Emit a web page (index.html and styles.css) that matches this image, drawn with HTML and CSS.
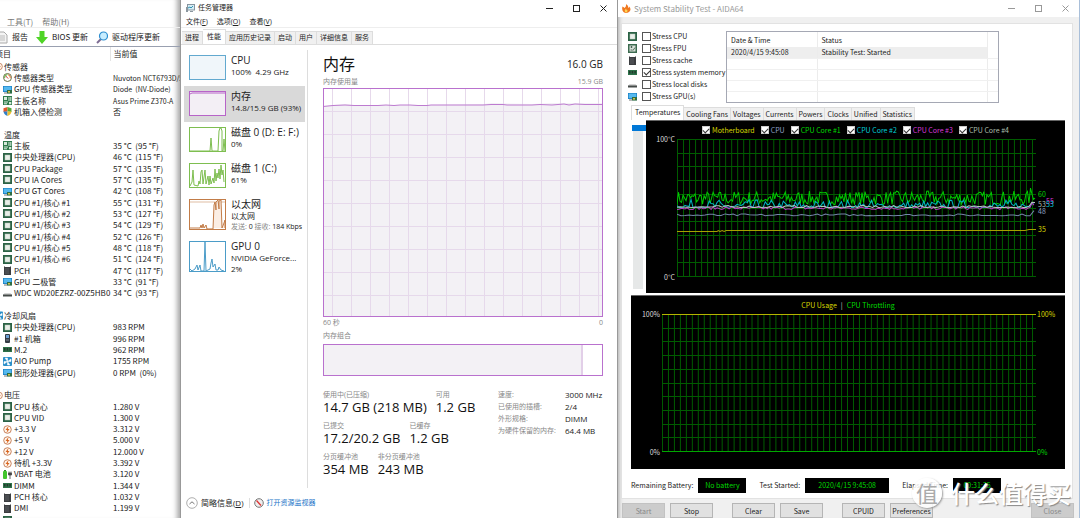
FILE: index.html
```html
<!DOCTYPE html>
<html lang="zh-CN">
<head>
<meta charset="utf-8">
<title>System Stability Test - AIDA64</title>
<link rel="stylesheet" href="styles.css">
</head>
<body>
<svg class="sprite" aria-hidden="true">
  <symbol id="i-cpu" viewBox="0 0 9 9"><rect width="9" height="9" fill="#2b6245"/><rect x="2" y="2" width="5" height="5" fill="#e8eee8" stroke="#b9c9bc" stroke-width=".5"/></symbol>
  <symbol id="i-fpu" viewBox="0 0 9 9"><rect width="9" height="9" fill="#3c6b50"/><rect x="1.5" y="1.5" width="6" height="6" fill="#d9e2da"/><path d="M2.5 3h2M3.5 2v2M5 6.5l2-3M2.5 6h2" stroke="#33513f" stroke-width=".8"/></symbol>
  <symbol id="i-gpu" viewBox="0 0 9 9"><rect y="1" width="9" height="6" fill="#1a7fc4"/><rect x=".7" y="1.6" width="7.6" height="4.6" fill="#55b8ee"/><rect x="4" y="5" width="5" height="3.6" fill="#2d6d45"/><rect x="5" y="6" width="2" height="1.6" fill="#d3c14e"/><path d="M1 8h3" stroke="#777"/></symbol>
  <symbol id="i-board" viewBox="0 0 9 9"><rect width="9" height="9" fill="#2f7b4c"/><path d="M1 1h3v3H1zM5.5 1h1v4h-1zM7.3 1h1v4h-1zM1 5.5h4v1H1zM1 7.3h3v1H1zM6 6h2.3v2.3H6z" fill="#d8eadc"/></symbol>
  <symbol id="i-gauge" viewBox="0 0 9 9"><circle cx="4.5" cy="4.5" r="4" fill="#fff" stroke="#6a7045"/><path d="M1.6 5A3 3 0 0 1 4.5 1.6" stroke="#55b033" fill="none"/><path d="M5 1.7A3 3 0 0 1 7.3 5" stroke="#e2702c" fill="none"/><path d="M2.8 3l2.4 2.6" stroke="#c22" stroke-width=".9"/></symbol>
  <symbol id="i-shield" viewBox="0 0 9 9"><path d="M4.5 0L.5 1.3V5l4-.5z" fill="#e2582c"/><path d="M4.5 0l4 1.3V5l-4-.5z" fill="#58a83a"/><path d="M.5 4.5h4V9Q1 7.500.5 4.500z" fill="#2f7fc8"/><path d="M8.500 4.500h-4V9Q8 7.500 8.500 4.500z" fill="#f0be2c"/></symbol>
  <symbol id="i-chip" viewBox="0 0 9 9"><path d="M1 1l1-1v1h5V0l1 1v8H1z" fill="#3b3d40"/><path d="M3 2v6M5 2v6" stroke="#6b6e72" stroke-width=".7"/></symbol>
  <symbol id="i-disk" viewBox="0 0 9 9"><path d="M1.500 4h6L9 6H0z" fill="#d5d5d5"/><rect y="5.500" width="9" height="2" fill="#454a48"/></symbol>
  <symbol id="i-case" viewBox="0 0 9 9"><rect x="2" width="5" height="9" rx="1" fill="#343b44"/><rect x="3" y="1" width="3" height="3" fill="#6ca0d4"/><path d="M3 6h3" stroke="#7e8791"/></symbol>
  <symbol id="i-ram" viewBox="0 0 9 9"><rect y="2" width="9" height="5" fill="#2c7148"/><path d="M1 3h1.500v2.500H1zM3.700 3h1.500v2.500H3.700zM6.400 3h1.500v2.500H6.400z" fill="#24372c"/></symbol>
  <symbol id="i-fan" viewBox="0 0 9 9"><rect width="9" height="9" rx="1" fill="#2b8fc9"/><path d="M4.500 4.500L2 1h2.500zM4.500 4.500L8 2v2.500zM4.500 4.500L7 8H4.500zM4.500 4.500L1 7V4.500z" fill="#fff" stroke="#fff" stroke-width=".5"/></symbol>
  <symbol id="i-volt" viewBox="0 0 9 9"><circle cx="4.500" cy="4.500" r="3.800" fill="#fff4ea" stroke="#bb6a3e" stroke-width=".8"/><path d="M5.500 1L2.500 5h1.800L3.500 8 6.500 4H4.800z" fill="#d9641e"/></symbol>
  <symbol id="i-battery" viewBox="0 0 9 9"><rect y="1" width="4" height="8" rx="1" fill="#42c52d"/><rect x="1" width="2" height="1" fill="#2f8a24"/><path d="M7 5v4M5.500 3h3v2h-3zM6 1.500V3M8 1.500V3" stroke="#444" stroke-width=".8" fill="#444"/></symbol>
  <symbol id="i-min" viewBox="0 0 9 9"><path d="M1 4.500h7" stroke="currentColor"/></symbol>
  <symbol id="i-max" viewBox="0 0 9 9"><rect x="1.500" y="1.500" width="6" height="6" fill="none" stroke="currentColor"/></symbol>
  <symbol id="i-close" viewBox="0 0 9 9"><path d="M1.500 1.500l6 6M7.500 1.500l-6 6" stroke="currentColor" fill="none"/></symbol>
</svg>

<main class="desktop">
  <section class="sensors" aria-label="传感器">
    <nav class="sensors-menu"><button>工具(T)</button><button>帮助(H)</button></nav>
    <div class="toolbar">
      <button><svg class="tool-icon" viewBox="0 0 12 13"><path d="M1 1h7l3 3v8H1z" fill="#f4f4f4" stroke="#aaa"/><path d="M3 5h6M3 7h6M3 9h6" stroke="#bbb"/></svg>报告</button>
      <button><svg class="tool-icon" viewBox="0 0 12 13"><path d="M3.500 0h5v6H12l-6 7-6-7h3.500z" fill="#4fd426"/></svg>BIOS 更新</button>
      <button><svg class="tool-icon" viewBox="0 0 12 13"><path d="M1 12l4-4" stroke="#7d6d94" stroke-width="2"/><circle cx="7.500" cy="5" r="4" fill="#c7edff" stroke="#2c8ed0" stroke-width="1.200"/></svg>驱动程序更新</button>
    </div>
    <div class="list-clip">
    <table class="sensor-table">
      <thead><tr><th scope="col">项目</th><th scope="col">当前值</th></tr></thead>
      <tbody id="sensor-rows"></tbody>
    </table>
    </div>
  </section>

  <section class="taskmgr" aria-label="任务管理器">
    <header class="titlebar">
      <svg class="app-icon" viewBox="0 0 9 9"><rect x="1.500" y=".5" width="7" height="5.500" fill="#d5edf5" stroke="#8795a0"/><path d="M2 4l2-1 1 1 2-2" stroke="#3293b5" fill="none"/><path d="M0 3h2v5H0zM4 7h3v1H4z" fill="#8b979f"/></svg>
      <h1>任务管理器</h1>
      <div class="window-buttons">
        <button aria-label="最小化"><svg><use href="#i-min"/></svg></button>
        <button aria-label="最大化"><svg><use href="#i-max"/></svg></button>
        <button aria-label="关闭"><svg><use href="#i-close"/></svg></button>
      </div>
    </header>
    <nav class="tm-menu"><button>文件(<u>F</u>)</button><button>选项(<u>O</u>)</button><button>查看(<u>V</u>)</button></nav>
    <div class="tm-tabs"><button>进程</button><button class="active">性能</button><button>应用历史记录</button><button>启动</button><button>用户</button><button>详细信息</button><button>服务</button></div>
    <div class="tm-body">
      <div class="resources">
        <button class="resource"><svg class="thumb cpu" viewBox="0 0 37 25" preserveAspectRatio="none"><rect x=".5" y=".5" width="36" height="24"/></svg><span><b>CPU</b><span>100%&nbsp; 4.29 GHz</span></span></button>
        <button class="resource selected"><svg class="thumb mem" viewBox="0 0 37 25" preserveAspectRatio="none"><rect x=".5" y=".5" width="36" height="24"/><path d="M1 3l2-1h34"/></svg><span><b>内存</b><span>14.8/15.9 GB (93%)</span></span></button>
        <button class="resource"><svg class="thumb disk" viewBox="0 0 37 25" preserveAspectRatio="none"><rect x=".5" y=".5" width="36" height="24"/><path d="M1 24h20l1-13 1 13h6l1-20 1-3h1l1 3v20h1l1-12 1 12"/></svg><span><b>磁盘 0 (D: E: F:)</b><span>0%</span></span></button>
        <button class="resource"><svg class="thumb disk" viewBox="0 0 37 25" preserveAspectRatio="none"><rect x=".5" y=".5" width="36" height="24"/><path d="M1 23l2-4 1-12 1 15 4 1 1-5 1 3 1-12 1-2 1 14 1-7 1-7 1 14 2-8 1 9 1-9 1 8 2-6 1 5 1-14 1 12 1-8 1 5 1-9 1 10 1-14 1 10 1-5 1 12"/></svg><span><b>磁盘 1 (C:)</b><span>61%</span></span></button>
        <button class="resource tall"><svg class="thumb net" viewBox="0 0 37 31" preserveAspectRatio="none"><rect x=".5" y=".5" width="36" height="30"/><path class="light" d="M1 3h35"/><path class="fill" d="M1 29h10l1-3 1 3 1-4 1 4 2-3 1 4h6l1-24 1-3 1 8V3l2-2 1 9V2l2-1 1 28 2-5 1-3v8"/></svg><span><b>以太网</b><span>以太网</span><span class="net-rate"><i>发送:</i> 0 <i>接收:</i> 184 Kbps</span></span></button>
        <button class="resource tall"><svg class="thumb gpu" viewBox="0 0 37 31" preserveAspectRatio="none"><rect x=".5" y=".5" width="36" height="30"/><path d="M1 28l2 2 3-2 2-4 1 5 2-5 1 6h3l1-29 1 29 4-2 1-6 1-4 1 8 2-3 1 6h2l1-3 2 3 3 1"/></svg><span><b>GPU 0</b><span>NVIDIA GeForce...</span><span>2%</span></span></button>
      </div>
      <div class="memory">
        <div class="memory-head"><h2>内存</h2><span>16.0 GB</span></div>
        <div class="caption"><span>内存使用量</span><span>15.9 GB</span></div>
        <svg class="mem-graph" id="mem-graph" viewBox="0 0 280 229" preserveAspectRatio="none"></svg>
        <div class="caption below"><span>60 秒</span><span>0</span></div>
        <div class="caption"><span>内存组合</span></div>
        <div class="composition"><div class="used"></div></div>
        <div class="stats">
          <div class="stats-main">
            <dl><div><dt>使用中(已压缩)</dt><dd>14.7 GB (218 MB)</dd></div><div><dt>可用</dt><dd>1.2 GB</dd></div></dl>
            <dl><div><dt>已提交</dt><dd>17.2/20.2 GB</dd></div><div><dt>已缓存</dt><dd>1.2 GB</dd></div></dl>
            <dl><div><dt>分页缓冲池</dt><dd>354 MB</dd></div><div><dt>非分页缓冲池</dt><dd>243 MB</dd></div></dl>
          </div>
          <dl class="stats-side"><dt>速度:</dt><dd>3000 MHz</dd><dt>已使用的插槽:</dt><dd>2/4</dd><dt>外形规格:</dt><dd>DIMM</dd><dt>为硬件保留的内存:</dt><dd>64.4 MB</dd></dl>
        </div>
      </div>
    </div>
    <footer class="tm-footer">
      <svg class="fold" viewBox="0 0 12 12"><circle cx="6" cy="6" r="5.300" fill="#fff" stroke="#999" stroke-width=".8"/><path d="M3.500 7L6 4.800 8.500 7" fill="none" stroke="#777"/></svg>
      <button>简略信息(<u>D</u>)</button>
      <svg class="monitor" viewBox="0 0 10 10"><circle cx="5" cy="5" r="4.300" fill="#eee" stroke="#777"/><path d="M2.500 2.500l4.500 5" stroke="#d33" stroke-width="1.300"/></svg>
      <a href="#monitor">打开资源监视器</a>
    </footer>
  </section>

  <section class="aida" aria-label="System Stability Test">
    <header class="titlebar">
      <svg class="app-icon" viewBox="0 0 9 9"><path d="M4 0q3 2 2 4 1 0 1-1.500Q10 5 7 8 4 10 1.500 8-.5 6 .5 2.500 2 3 2.500 4 4.500 2.500 4 0z" fill="#f07820"/><path d="M3 8q-1-2 1-3.500Q4 6 5.500 6 5.500 8 4.500 8.500z" fill="#ffd454"/></svg>
      <h1>System Stability Test - AIDA64</h1>
      <div class="window-buttons">
        <button aria-label="Minimize"><svg><use href="#i-min"/></svg></button>
        <button aria-label="Maximize"><svg><use href="#i-max"/></svg></button>
        <button aria-label="Close window"><svg><use href="#i-close"/></svg></button>
      </div>
    </header>
    <div class="aida-panel">
      <div class="aida-top">
        <div class="stress">
          <label><svg><use href="#i-cpu"/></svg><input type="checkbox">Stress CPU</label>
          <label><svg><use href="#i-fpu"/></svg><input type="checkbox">Stress FPU</label>
          <label><svg><use href="#i-chip"/></svg><input type="checkbox">Stress cache</label>
          <label><svg><use href="#i-ram"/></svg><input type="checkbox" checked>Stress system memory</label>
          <label><svg><use href="#i-disk"/></svg><input type="checkbox">Stress local disks</label>
          <label><svg><use href="#i-gpu"/></svg><input type="checkbox">Stress GPU(s)</label>
        </div>
        <div class="log">
          <table>
            <thead><tr><th scope="col">Date &amp; Time</th><th scope="col">Status</th><th class="end"></th></tr></thead>
            <tbody><tr class="hit"><td>2020/4/15 9:45:08</td><td>Stability Test: Started</td><td></td></tr><tr><td></td><td></td><td></td></tr><tr><td></td><td></td><td></td></tr><tr><td></td><td></td><td></td></tr><tr><td></td><td></td><td></td></tr></tbody>
          </table>
        </div>
      </div>
      <div class="aida-tabs"><button class="active">Temperatures</button><button>Cooling Fans</button><button>Voltages</button><button>Currents</button><button>Powers</button><button>Clocks</button><button>Unified</button><button>Statistics</button></div>
      <div class="temp-row">
        <div class="slider"></div>
        <div class="chart temp-chart">
          <div class="legend">
            <label class="yellow"><input type="checkbox" checked>Motherboard</label>
            <label class="steel"><input type="checkbox" checked>CPU</label>
            <label class="green"><input type="checkbox" checked>CPU Core #1</label>
            <label class="cyan"><input type="checkbox" checked>CPU Core #2</label>
            <label class="magenta"><input type="checkbox" checked>CPU Core #3</label>
            <label class="pale"><input type="checkbox" checked>CPU Core #4</label>
          </div>
          <div class="axis"><span>100°C</span><span>0°C</span></div>
          <svg class="plot" id="temp-plot" viewBox="0 0 358 138" preserveAspectRatio="none"></svg>
          <div class="readings"><span class="green r60">60</span><span class="pale r53">53</span><span class="magenta r55">55</span><span class="cyan r53b">53</span><span class="steel r48">48</span><span class="yellow r35">35</span></div>
        </div>
      </div>
      <div class="chart usage-chart">
        <div class="legend"><span class="yellow">CPU Usage</span><span class="bar">|</span><span class="green">CPU Throttling</span></div>
        <div class="axis"><span>100%</span><span>0%</span></div>
        <svg class="plot" id="usage-plot" viewBox="0 0 376 138" preserveAspectRatio="none"></svg>
        <div class="axis right"><span class="yellow">100%</span><span class="green">0%</span></div>
      </div>
      <div class="status">
        <span>Remaining Battery:</span><output>No battery</output>
        <span>Test Started:</span><output class="wide">2020/4/15 9:45:08</output>
        <span>Elapsed Time:</span><output>00:31:35</output>
      </div>
    </div>
    <div class="actions">
      <button disabled>Start</button><button>Stop</button><button class="group">Clear</button><button>Save</button><button class="group">CPUID</button><button>Preferences</button><button class="last" disabled>Close</button>
    </div>
    <div class="watermark"><span class="seal">值</span><span class="mark">什么值得买</span></div>
  </section>
</main>
<script src="app.js"></script>
</body>
</html>
```
FILE: styles.css
```css
* { box-sizing: border-box; }
body {
  margin: 0;
  height: 100vh;
  overflow: hidden;
  background: #fff;
  color: #222;
  font: 7px/10px "Open Sans", "Noto Sans CJK SC", sans-serif;
}
button { font: inherit; color: inherit; background: none; border: 0; margin: 0; padding: 0; white-space: nowrap; }
h1, h2, dl, dd { margin: 0; font-weight: 400; }
svg { display: block; flex: none; }
.sprite { position: absolute; width: 0; height: 0; }
.desktop { display: grid; grid-template-columns: 181fr 437fr 462fr; height: 100vh; }
.desktop > section { min-width: 0; min-height: 0; overflow: hidden; display: flex; flex-direction: column; }

/* Sensor list */
.sensors { padding-top: 16px; box-shadow: inset -7px 0 5px -4px #aaa; border-right: 1px solid #999; font-family: "Noto Sans CJK SC", sans-serif; font-size: 8px; }
.sensors-menu { display: flex; gap: 9px; height: 12px; padding-left: 7px; color: #777; border-bottom: 1px solid #eee; }
.toolbar { display: flex; gap: 8px; height: 19px; border-bottom: 1px solid #99a0b0; margin-left: -4px; }
.toolbar button { display: flex; align-items: center; gap: 4px; }
.tool-icon { width: 12px; height: 13px; }
.list-clip { flex: 1; min-height: 0; overflow: hidden; }
.sensor-table { width: 100%; height: calc(100vh - 39px); border-collapse: collapse; table-layout: fixed; margin-left: -5px; line-height: 10px; }
.sensor-table th { height: 14px; padding: 0; font-weight: 400; text-align: left; }
.sensor-table th:first-child { width: 115px; border-right: 1px solid #e4e4e4; }
.sensor-table th + th, .sensor-table td { padding: 0 0 0 3px; white-space: nowrap; }
.sensor-table td:first-child { padding: 0; }
.sensor-table .device { font-size: 7px; }
.cell { display: flex; align-items: center; gap: 2px; padding-left: 8px; height: 10px; }
.cell.group { padding-left: 0; gap: 1px; }
.cell svg { width: 9px; height: 9px; }
.cell.group svg { width: 8px; }

/* Window chrome */
.titlebar { display: flex; align-items: center; height: 16px; flex: none; }
.titlebar h1 { flex: 1; font-size: 7px; line-height: 12px; }
.app-icon { width: 9px; height: 9px; margin: 0 3px 0 5px; }
.window-buttons { display: flex; gap: 18px; padding-right: 9px; color: #222; }
.window-buttons svg { width: 9px; height: 9px; }

/* Task manager */
.taskmgr { border-right: 1px solid #999; font-size: 7px; background: #fff; }
.tm-menu { display: flex; gap: 9px; height: 12px; padding-left: 5px; flex: none; border-bottom: 1px solid #eee; }
.tm-tabs { display: flex; align-items: flex-end; height: 17px; flex: none; padding-left: 1px; border-bottom: 1px solid #ddd; }
.tm-tabs button { height: 13px; padding: 0 3px; background: #f0f0f0; border: solid #ddd; border-width: 1px 1px 0 0; }
.tm-tabs .active { height: 15px; padding: 0 4px; background: #fff; }
.tm-body { display: flex; flex: 1; min-height: 0; padding-top: 5px; }
.resources { width: 127px; flex: none; padding-left: 3px; overflow: hidden; border-right: 1px solid #ddd; }
.resource { display: flex; width: 121px; height: 36px; padding: 5px 0 0 5px; gap: 5px; text-align: left; }
.resource.tall { height: 42px; }
.resource.selected { background: #d9d9d9; }
.resource > span { display: flex; flex-direction: column; font-size: 8px; line-height: 11px; }
.resource b { font-weight: 400; font-size: 10px; line-height: 11px; }
.resource .net-rate { font-size: 7px; }
.net-rate i { font-style: normal; color: #888; }
.thumb { width: 37px; height: 25px; fill: none; stroke: currentColor; stroke-width: 1; }
.tall .thumb { height: 31px; }
.thumb.cpu { color: #62a9cf; }
.thumb.cpu rect { fill: #f0f6fa; }
.thumb.mem { color: #b764c8; }
.thumb.mem rect { fill: #f3eff5; }
.thumb.disk { color: #7ebe50; }
.thumb.net { color: #c27c48; }
.thumb.net .fill { fill: #fbeee4; }
.thumb .light { opacity: .5; }
.thumb.gpu { color: #4b9cc8; }
.memory { flex: 1; min-width: 0; padding: 1px 14px 0 15px; }
.memory-head { display: flex; justify-content: space-between; align-items: center; height: 26px; font-size: 10px; }
.memory-head h2 { font-size: 16px; line-height: 24px; color: #111; }
.caption { display: flex; justify-content: space-between; line-height: 10px; color: #888; }
.caption.below { padding: 1px 0 3px; }
.mem-graph { width: 100%; height: 229px; margin-top: 1px; }
.composition { height: 32px; margin-top: 3px; border: 1px solid #b971ce; }
.used { width: 93%; height: 100%; background: #f3f1f5; border-right: 2px solid #e2cfe8; }
.stats { display: flex; justify-content: space-between; margin-top: 13px; }
.stats dt { color: #888; font-size: 7px; line-height: 11px; }
.stats-main dl { display: flex; gap: 9px; height: 31px; }
.stats-main dd { font-size: 13px; line-height: 15px; color: #111; white-space: nowrap; }
.stats-side { display: grid; grid-template-columns: 67px 38px; grid-auto-rows: 12px; line-height: 11px; white-space: nowrap; }
.stats-side dd { font-size: 8px; }
.tm-footer { display: flex; align-items: center; height: 30px; flex: none; padding-left: 5px; }
.fold { width: 12px; height: 12px; margin-right: 3px; }
.tm-footer button { padding-right: 5px; border-right: 1px solid #ddd; font-size: 8px; }
.monitor { width: 10px; height: 10px; margin: 0 3px 0 4px; }
.tm-footer a { color: #2475c8; text-decoration: none; }

/* Stability test */
.aida { position: relative; background: #f0f0f0; border-right: 1px solid #a9bfd9; box-shadow: inset 5px 0 4px -4px #aaa; font-family: "Noto Sans CJK SC", sans-serif; font-size: 7px; }
.aida .titlebar { height: 17px; background: #fff; }
.aida .titlebar h1, .aida .window-buttons { color: #999; }
.aida .titlebar h1 { font-size: 8px; }
.aida .titlebar .app-icon { margin-left: 4px; }
.aida-panel { flex: 1; min-height: 0; display: flex; flex-direction: column; margin: 6px 6px 0 3px; padding: 7px 7px 0 9px; background: #fff; border: 1px solid #e2e2e2; }
.aida-top { display: flex; height: 72px; flex: none; }
.stress { width: 95px; flex: none; display: flex; flex-direction: column; margin: -1px 0 0 -3px; }
.stress label { display: flex; align-items: center; height: 12px; white-space: nowrap; }
.stress svg { width: 9px; height: 9px; margin-right: 5px; }
input[type="checkbox"] { appearance: none; position: relative; width: 9px; height: 9px; margin: 0 1px 0 0; background: #fff; border: 1px solid #555; flex: none; }
input[type="checkbox"]:checked::before { content: ""; position: absolute; left: 1px; top: 1px; width: 5px; height: 3px; border: solid #333; border-width: 0 0 1px 1px; transform: rotate(-45deg); }
.log { width: 273px; height: 72px; overflow: hidden; margin-left: 3px; border: 1px solid #a5a8b4; }
.log table { width: 100%; border-collapse: collapse; table-layout: fixed; }
.log th, .log td { padding: 0 0 0 4px; text-align: left; font-weight: 400; border-right: 1px solid #ececec; height: 11px; }
.log th { height: 15px; width: 90px; }
.log th + th { width: auto; }
.log th.end { width: 11px; }
.log td { border-bottom: 1px solid #f0f0f0; line-height: 9px; }
.log .hit td:not(:last-child) { background: #eee; }
.log tr > :last-child { border-right: 0; }
.aida-tabs { display: flex; align-items: flex-end; height: 17px; flex: none; }
.aida-tabs button { height: 13px; padding: 0 2px; background: #f0f0f0; border: solid #ddd; border-width: 1px 1px 0 0; }
.aida-tabs .active { height: 15px; padding: 0 3px 2px; background: #fff; border-left-width: 1px; }
.temp-row { display: flex; height: 173px; flex: none; }
.slider { width: 15px; flex: none; margin: 5px 0 4px; border: solid #fff; border-width: 0 3px 0 2px; background: #e6e8e8; }
.slider::before { content: ""; display: block; height: 6px; margin: 0 -3px 0 -1px; background: #0078d7; }
.chart { position: relative; flex: 1; min-width: 0; display: grid; grid-template-columns: 31px 1fr 29px; grid-template-rows: 18px 138px; background: #000; color: #ddd; border-top: 1px solid #666; }
.legend { grid-column: 1 / -1; display: flex; justify-content: center; align-items: center; gap: 6px; white-space: nowrap; }
.legend label { display: flex; align-items: center; }
.legend input[type="checkbox"] { width: 8px; height: 8px; margin-right: 2px; border-color: #ccc; }
.legend input[type="checkbox"]:checked::before { left: 0; }
.axis { display: flex; flex-direction: column; justify-content: space-between; margin: -5px 2px -5px 0; text-align: right; }
.axis.right { margin: -5px 0 -5px 1px; text-align: left; }
.plot { width: 100%; height: 138px; }
.readings { position: relative; }
.readings span { position: absolute; left: 2px; }
.readings .r60 { top: 50px; }
.readings .r53 { top: 60px; }
.readings .r55 { top: 57px; left: 10px; }
.readings .r53b { top: 60px; left: 10px; }
.readings .r48 { top: 67px; }
.readings .r35 { top: 85px; }
.usage-chart { flex: none; height: 174px; margin-top: 2px; }
.usage-chart .legend { gap: 4px; }
.yellow { color: #d8d800; }
.steel { color: #8fa0c4; }
.green { color: #00d900; }
.cyan { color: #00cfd8; }
.magenta { color: #d839d8; }
.pale { color: #adbfad; }
.status { display: flex; align-items: center; height: 32px; flex: none; white-space: nowrap; }
.status span + output { margin: 0 13px 0 5px; }
.status output { width: 48px; height: 15px; line-height: 14px; background: #000; color: #00d900; text-align: center; }
.status output.wide { width: 84px; }
.actions { display: flex; gap: 5px; height: 19px; padding: 4px 5px 0 4px; flex: none; }
.actions button { width: 43px; height: 15px; background: #e1e1e1; border: 1px solid #b5b5b5; }
.actions button:disabled { background: #ccc; color: #888; border-color: #c2c2c2; }
.actions .group { margin-left: 14px; }
.actions .last { margin-left: auto; }
.watermark { position: absolute; right: 8px; bottom: 10px; display: flex; align-items: center; gap: 9px; color: #fff; }
.seal { width: 30px; height: 30px; border-radius: 50%; background: rgba(255, 255, 255, .85); color: #aaa; font-size: 22px; line-height: 29px; text-align: center; box-shadow: 1px 1px 2px #999; }
.mark { font-size: 24px; line-height: 30px; font-weight: 500; text-shadow: 1px 1px 1px #888; }
```
FILE: app.js
```js
const rows = [
  ['volt', '传感器', null],
  ['gauge', '传感器类型', 'Nuvoton NCT6793D/5'],
  ['gpu', 'GPU 传感器类型', 'Diode  (NV-Diode)'],
  ['board', '主板名称', 'Asus Prime Z370-A'],
  ['shield', '机箱入侵检测', '否'],
  [],
  ['none', '温度', null],
  ['board', '主板', '35 °C  (95 °F)'],
  ['cpu', '中央处理器(CPU)', '46 °C  (115 °F)'],
  ['cpu', 'CPU Package', '57 °C  (135 °F)'],
  ['cpu', 'CPU IA Cores', '57 °C  (135 °F)'],
  ['gpu', 'CPU GT Cores', '42 °C  (108 °F)'],
  ['cpu', 'CPU #1/核心 #1', '55 °C  (131 °F)'],
  ['cpu', 'CPU #1/核心 #2', '53 °C  (127 °F)'],
  ['cpu', 'CPU #1/核心 #3', '54 °C  (129 °F)'],
  ['cpu', 'CPU #1/核心 #4', '52 °C  (126 °F)'],
  ['cpu', 'CPU #1/核心 #5', '48 °C  (118 °F)'],
  ['cpu', 'CPU #1/核心 #6', '51 °C  (124 °F)'],
  ['chip', 'PCH', '47 °C  (117 °F)'],
  ['gpu', 'GPU 二极管', '33 °C  (91 °F)'],
  ['disk', 'WDC WD20EZRZ-00Z5HB0', '34 °C  (93 °F)'],
  [],
  ['fan', '冷却风扇', null],
  ['cpu', '中央处理器(CPU)', '983 RPM'],
  ['case', '#1 机箱', '996 RPM'],
  ['ram', 'M.2', '962 RPM'],
  ['fan', 'AIO Pump', '1755 RPM'],
  ['gpu', '图形处理器(GPU)', '0 RPM  (0%)'],
  [],
  ['volt', '电压', null],
  ['cpu', 'CPU 核心', '1.280 V'],
  ['cpu', 'CPU VID', '1.300 V'],
  ['volt', '+3.3 V', '3.312 V'],
  ['volt', '+5 V', '5.000 V'],
  ['volt', '+12 V', '12.000 V'],
  ['volt', '待机 +3.3V', '3.392 V'],
  ['battery', 'VBAT 电池', '3.120 V'],
  ['ram', 'DIMM', '1.344 V'],
  ['chip', 'PCH 核心', '1.032 V'],
  ['chip', 'DMI', '1.199 V'],
  ['cpu', '', '']
];

document.getElementById('sensor-rows').innerHTML = rows.map(([icon, name, value]) => {
  if (!icon) return '<tr><td><div class="cell"></div></td><td></td></tr>';
  const kind = value === null ? 'cell group' : 'cell';
  const text = (value || '').replace('  ', '&nbsp; ');
  const device = /^[A-Z]/.test(text) ? ' class="device"' : '';
  return `<tr><td><div class="${kind}"><svg><use href="#i-${icon}"/></svg>${name}</div></td><td${device}>${text}</td></tr>`;
}).join('');

// Repeatable pseudo-random source, so the traces are the same on each load.
let seed = 7;
const random = () => {
  seed = (seed * 16807) % 2147483647;
  return seed / 2147483647;
};

function grid(width, height, stepX, stepY, color) {
  let d = '';
  for (let x = 0.5; x < width; x += stepX) d += `M${x} 0V${height}`;
  for (let y = 0; y <= height; y += stepY) d += `M0 ${Math.round(y) + 0.5}H${width}`;
  return `<path d="${d}" stroke="${color}" fill="none"/>`;
}

function trace(color, low, high, sharp, step) {
  let d = '';
  for (let x = 0; x <= 357; x += step) {
    const t = low + (high - low) * Math.pow(random(), sharp);
    const rise = x > 352 ? 3 : 0;
    d += `${d ? 'L' : 'M'}${x} ${(137 - (t + rise) * 1.37).toFixed(1)}`;
  }
  return `<path d="${d}" stroke="${color}" fill="none"/>`;
}

document.getElementById('temp-plot').innerHTML =
  grid(358, 138, 6, 13.7, '#005c00') +
  trace('#00c800', 52, 62, 1.1, 1.5) +
  trace('#00b9c4', 50, 56, 3, 2) +
  trace('#b838c0', 48.5, 50.5, 1, 2) +
  trace('#b6c4bd', 50, 51.5, 2, 3) +
  trace('#7386a8', 44, 45.4, 2, 4) +
  '<path d="M0 92.500h40l1-1 2 1 2-1 2 1 2-1h298l4-1h7" stroke="#a5a000" fill="none"/>';

document.getElementById('usage-plot').innerHTML =
  grid(376, 138, 6, 13.7, '#005c00') +
  '<path d="M0 .5H376" stroke="#b5b500"/><path d="M0 137.500H376" stroke="#00a800"/>';

document.getElementById('mem-graph').innerHTML =
  '<path d="M0 18l10-1 12-1 9 1h72l58-1 8-1 40 1 20-1h50v213H0z" fill="#f3f1f5"/>' +
  '<path d="' +
  Array.from({ length: 15 }, (_, i) => `M${9.5 + i * 19} 0V229`).join('') +
  Array.from({ length: 9 }, (_, i) => `M0 ${23.5 + i * 23}H280`).join('') +
  '" stroke="#e6d9eb" fill="none"/>' +
  '<path d="M0 18.500l10-1 12-.5 9 .5h24l8-.5 8 .5 6-.5h10l8 .5h9l4-.5h52l8-.5h12l4 .5h25l8-.5 12 .5 12-1 5 1 6-1 10 .5h20" stroke="#bd7bd0" fill="none"/>' +
  '<rect x=".5" y=".5" width="279" height="228" fill="none" stroke="#b971ce"/>';
```
